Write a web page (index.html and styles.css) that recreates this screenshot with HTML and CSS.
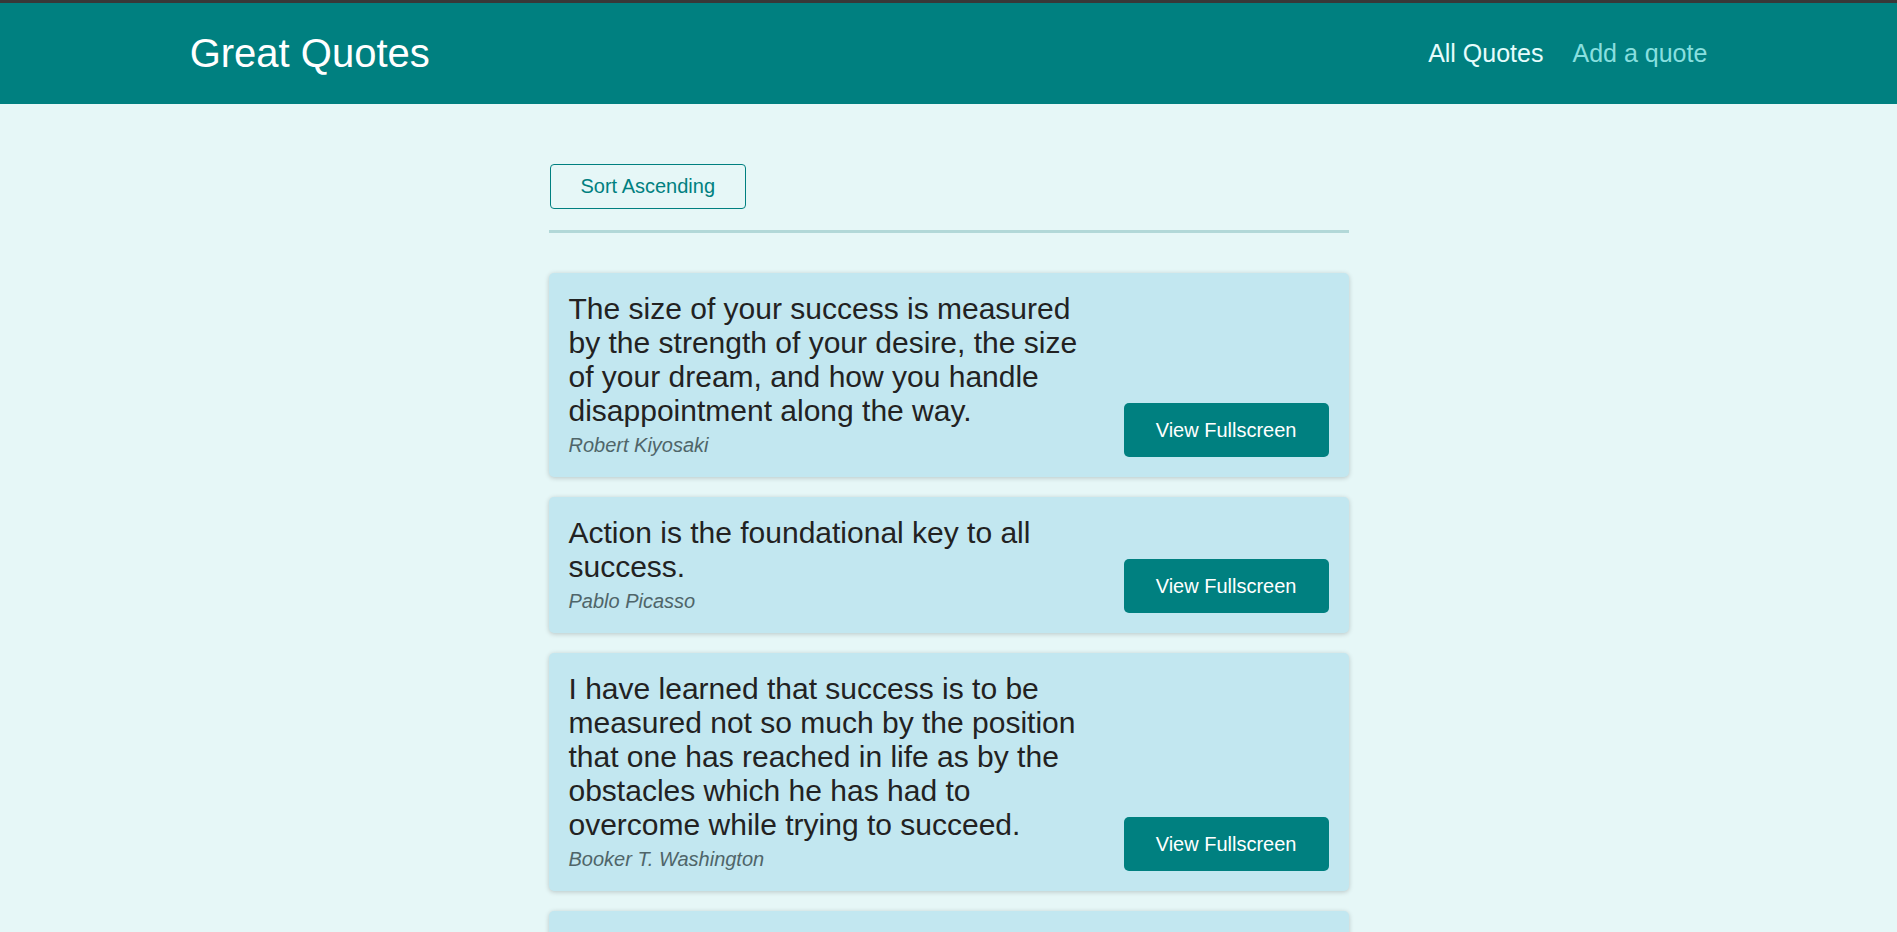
FILE: index.html
```
<!DOCTYPE html>
<html lang="en">
<head>
<meta charset="utf-8">
<title>Great Quotes</title>
<link rel="stylesheet" href="styles.css">
</head>
<body>
<div class="topline"></div>
<header class="header">
  <div class="logo">Great Quotes</div>
  <nav class="nav">
    <ul>
      <li><a href="#" class="active">All Quotes</a></li>
      <li><a href="#">Add a quote</a></li>
    </ul>
  </nav>
</header>
<main class="main">
  <div class="sorting">
    <button class="btn-flat">Sort Ascending</button>
  </div>
  <ul class="list">
    <li class="item">
      <figure>
        <blockquote><p>The size of your success is measured by the strength of your desire, the size of your dream, and how you handle disappointment along the way.</p></blockquote>
        <figcaption>Robert Kiyosaki</figcaption>
      </figure>
      <a href="#" class="btn">View Fullscreen</a>
    </li>
    <li class="item">
      <figure>
        <blockquote><p>Action is the foundational key to all success.</p></blockquote>
        <figcaption>Pablo Picasso</figcaption>
      </figure>
      <a href="#" class="btn">View Fullscreen</a>
    </li>
    <li class="item">
      <figure>
        <blockquote><p>I have learned that success is to be measured not so much by the position that one has reached in life as by the obstacles which he has had to overcome while trying to succeed.</p></blockquote>
        <figcaption>Booker T. Washington</figcaption>
      </figure>
      <a href="#" class="btn">View Fullscreen</a>
    </li>
    <li class="item">
      <figure>
        <blockquote><p>Success is not final, failure is not fatal: it is the courage to continue that counts.</p></blockquote>
        <figcaption>Winston Churchill</figcaption>
      </figure>
      <a href="#" class="btn">View Fullscreen</a>
    </li>
  </ul>
</main>
</body>
</html>
```
FILE: styles.css
```
* { box-sizing: border-box; }
html { font-family: "Liberation Sans", Arial, sans-serif; }
body {
  margin: 0;
  background-color: #e6f7f7;
  font-family: "Liberation Sans", Arial, sans-serif;
}
.topline {
  height: 3px;
  background-color: #383838;
}
.header {
  height: 101px;
  display: flex;
  align-items: center;
  justify-content: space-between;
  background-color: #008080;
  padding: 0 10%;
}
.logo {
  font-size: 40px;
  color: #ffffff;
}
.nav ul {
  list-style: none;
  margin: 0;
  padding: 0;
  display: flex;
  align-items: baseline;
}
.nav li { margin-left: 29px; }
.nav a {
  text-decoration: none;
  font-size: 25px;
  color: #88dfdf;
}
.nav a.active { color: #e6fcfc; }
.main {
  width: 800px;
  margin: 60px auto 0;
}
.sorting {
  padding-bottom: 21px;
  border-bottom: 3px solid #b2d8d8;
  margin-bottom: 40px;
}
.btn-flat {
  font: inherit;
  font-size: 20px;
  line-height: 23px;
  padding: 10px 30px;
  border: 1px solid #008080;
  border-radius: 4px;
  background: transparent;
  color: #008080;
  cursor: pointer;
  margin-left: 1px;
}
.list {
  list-style: none;
  margin: 0;
  padding: 0;
}
.item {
  display: flex;
  justify-content: space-between;
  align-items: flex-end;
  margin-bottom: 20px;
  padding: 19px 20px 20px;
  border-radius: 5px;
  background-color: #c2e7f0;
  box-shadow: 0 1px 5px rgba(0, 0, 0, 0.2);
}
.item figure {
  margin: 0;
  width: 520px;
}
.item blockquote {
  margin: 0;
  font-size: 30px;
  color: #222222;
}
.item blockquote p { margin: 0; }
.item figcaption {
  padding-top: 6px;
  font-size: 20px;
  font-style: italic;
  color: #4f6569;
}
.btn {
  display: block;
  font-size: 20px;
  line-height: 24px;
  padding: 15px 32px;
  border-radius: 5px;
  background-color: #008080;
  color: #ffffff;
  text-decoration: none;
  white-space: nowrap;
}
```
